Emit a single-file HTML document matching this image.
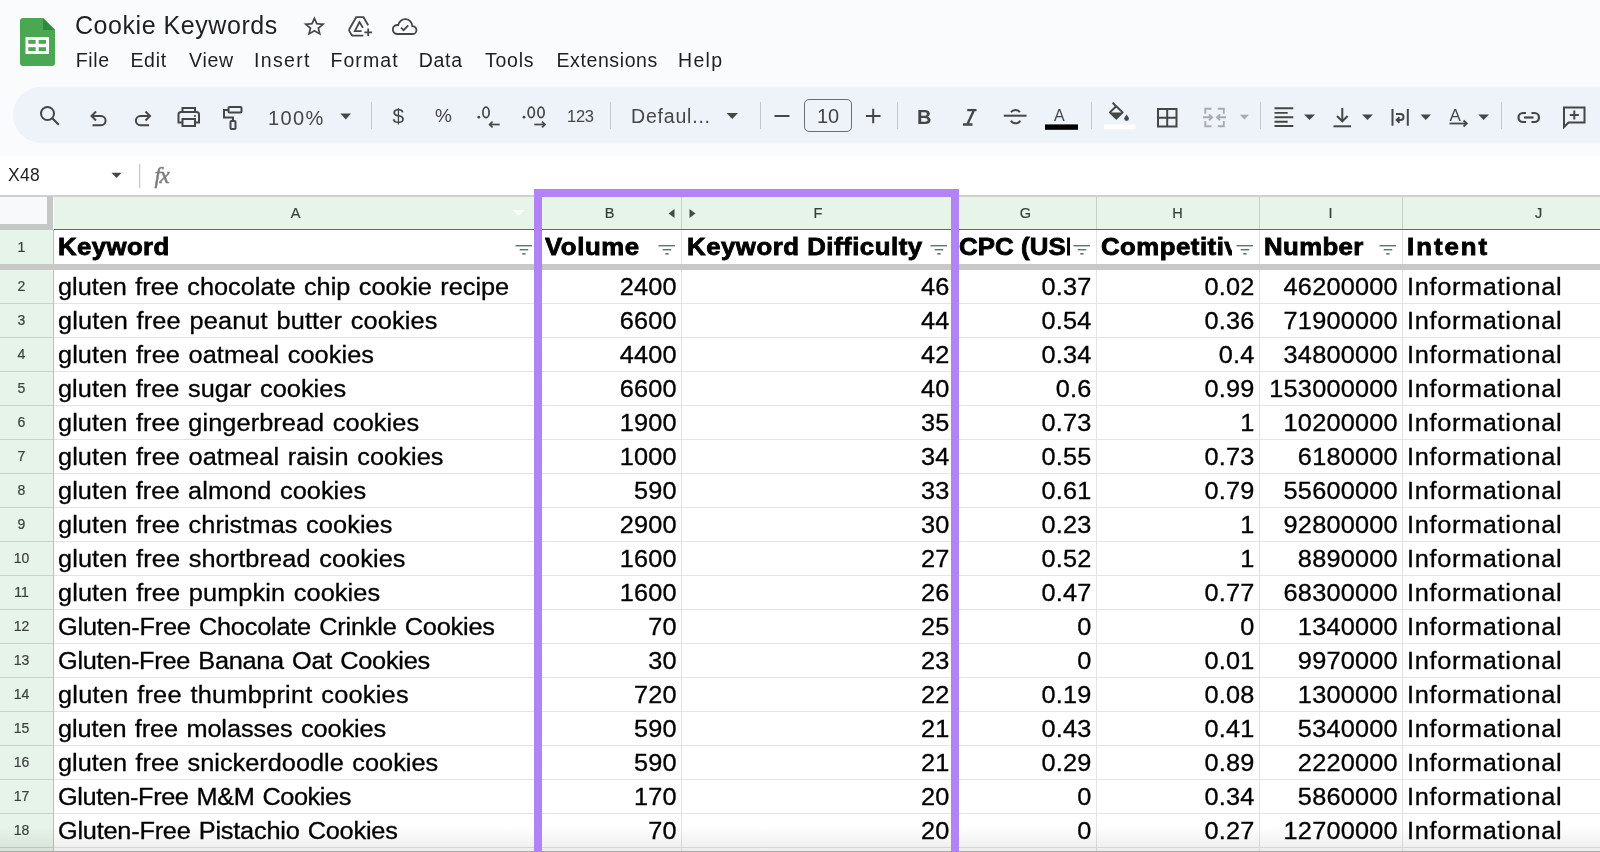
<!DOCTYPE html><html><head><meta charset="utf-8"><style>
*{margin:0;padding:0;box-sizing:border-box}
html,body{width:1600px;height:852px;overflow:hidden;background:#f9fbfd;font-family:"Liberation Sans",sans-serif;color:#1f1f1f}
.a{position:absolute;white-space:nowrap}
.menu{font-size:19.5px;letter-spacing:0.7px;color:#1f1f1f;top:48px;line-height:24px}
.tb{position:absolute;left:13px;top:87px;width:1640px;height:56px;border-radius:28px;background:#eef2f9}
.sep{position:absolute;top:102px;width:1px;height:27px;background:#c7c7c7}
.tbt{font-size:19.5px;color:#444746;line-height:24px}
.fbar{position:absolute;left:0;top:156px;width:1600px;height:39px;background:#fff}
.grid{position:absolute;left:0;top:195px;width:1600px;height:657px;background:#fff;overflow:hidden;will-change:transform}
.cell{position:absolute;font-size:23px;line-height:34px;color:#000;letter-spacing:1.3px;white-space:nowrap;overflow:hidden;-webkit-text-stroke:0.3px #000}
.num{letter-spacing:0.2px;text-align:right}
.sx{transform:scaleX(1.1);transform-origin:0 0}
.sxr{transform:scaleX(1.1);transform-origin:100% 0}
.hdr{font-weight:bold;letter-spacing:2.5px;-webkit-text-stroke:0.8px #000}
.rn{position:absolute;left:0;width:43px;text-align:center;font-size:14px;line-height:34px;color:#37423a;-webkit-text-stroke:0.2px #37423a}
.cl{position:absolute;top:1px;height:33px;text-align:center;font-size:14.5px;line-height:33px;color:#36433a;-webkit-text-stroke:0.2px #36433a}
</style></head><body><div style="position:absolute;left:0;top:0;width:1600px;height:852px;overflow:hidden;will-change:transform;background:#f9fbfd">
<svg class="a" style="left:0;top:0" width="80" height="80" viewBox="0 0 80 80">
<path d="M23 18 H43 L55 30 V63 a3 3 0 0 1 -3 3 H23 a3 3 0 0 1 -3 -3 V21 a3 3 0 0 1 3 -3z" fill="#4aa853"/>
<path d="M43 18 L55 30 H43z" fill="#2b8a3b"/>
<rect x="25.5" y="37" width="23.5" height="17" fill="#fff"/>
<rect x="28.3" y="40" width="7.4" height="3.8" fill="#4aa853"/>
<rect x="38.6" y="40" width="7.4" height="3.8" fill="#4aa853"/>
<rect x="28.3" y="47.2" width="7.4" height="3.8" fill="#4aa853"/>
<rect x="38.6" y="47.2" width="7.4" height="3.8" fill="#4aa853"/>
</svg>
<div class="a" style="left:75px;top:10px;font-size:25px;line-height:30px;letter-spacing:0.55px;color:#1f1f1f">Cookie Keywords</div>
<div class="a menu" style="left:75.7px;letter-spacing:0.7px">File</div>
<div class="a menu" style="left:130.4px;letter-spacing:0.7px">Edit</div>
<div class="a menu" style="left:189.1px;letter-spacing:0.7px">View</div>
<div class="a menu" style="left:254.1px;letter-spacing:1.3px">Insert</div>
<div class="a menu" style="left:330.4px;letter-spacing:1.1px">Format</div>
<div class="a menu" style="left:418.8px;letter-spacing:0.7px">Data</div>
<div class="a menu" style="left:485.1px;letter-spacing:0.7px">Tools</div>
<div class="a menu" style="left:556.5px;letter-spacing:0.6px">Extensions</div>
<div class="a menu" style="left:678.1px;letter-spacing:1.3px">Help</div>
<div class="tb"></div>
<div class="sep" style="left:370.5px"></div>
<div class="sep" style="left:609.5px"></div>
<div class="sep" style="left:759.5px"></div>
<div class="sep" style="left:896.5px"></div>
<div class="sep" style="left:1090.5px"></div>
<div class="sep" style="left:1259.5px"></div>
<div class="sep" style="left:1501.0px"></div>
<div class="a tbt" style="left:268px;top:106px;letter-spacing:1.4px;font-size:20px">100%</div>
<div class="a tbt" style="left:631px;top:104px;font-size:19.5px;letter-spacing:0.8px">Defaul...</div>
<div class="a" style="left:804px;top:99px;width:48px;height:33px;border:1.3px solid #6b6e70;border-radius:5px;background:transparent"></div>
<div class="a tbt" style="left:817px;top:104px;font-size:20px">10</div>
<div class="a tbt" style="left:567px;top:104px;font-size:16.5px;letter-spacing:-0.3px">123</div>
<div class="a tbt" style="left:392.5px;top:104px;font-size:21px">$</div>
<div class="a tbt" style="left:435px;top:104px;font-size:19px">%</div>
<svg class="a" style="left:0;top:0" width="1600" height="156" viewBox="0 0 1600 156"><g fill="none" stroke="#444746" stroke-width="2" stroke-linecap="butt"><circle cx="47.5" cy="113.5" r="6.5"/><path d="M52.3 118.3 L58.8 124.8" stroke-width="2.2"/><path d="M93 116 H101 a4.6 4.6 0 0 1 0 9.2 H92.5"/><path d="M96 111.5 L91.5 116 L96 120.5"/><path d="M148.5 116 H140.5 a4.6 4.6 0 0 0 0 9.2 H149"/><path d="M145.5 111.5 L150 116 L145.5 120.5"/><path d="M182.5 112 V108 H195 V112"/><path d="M182.5 122.5 H178.5 V114.5 a2.5 2.5 0 0 1 2.5 -2.5 H196.5 a2.5 2.5 0 0 1 2.5 2.5 V122.5 H195"/><rect x="182.5" y="119" width="12.5" height="7"/></g><circle cx="195" cy="116" r="1.1" fill="#444746"/><g fill="none" stroke="#444746" stroke-width="2"><rect x="228.5" y="107" width="13" height="5.5" rx="1"/><path d="M228.5 110 H224 V117.5 H233 V121"/><rect x="230.5" y="121" width="5" height="8" rx="1"/></g><path d="M340.5 113.5 H351 L345.75 119.5z" fill="#444746"/><g fill="#444746"><circle cx="478.8" cy="117.2" r="1.4"/><circle cx="524" cy="117.2" r="1.4"/></g><g fill="none" stroke="#444746" stroke-width="1.75"><ellipse cx="486" cy="112.4" rx="3.1" ry="5.2"/><ellipse cx="531.25" cy="112.4" rx="3.1" ry="5.2"/><ellipse cx="541" cy="112.4" rx="3.1" ry="5.2"/></g><g fill="none" stroke="#444746" stroke-width="1.7"><path d="M499.7 124.5 H490"/><path d="M492.6 121.6 L489.6 124.5 L492.6 127.4"/><path d="M534.3 124.5 H544.6"/><path d="M542 121.6 L545 124.5 L542 127.4"/></g><path d="M726.5 113 H738 L732.25 119z" fill="#444746"/><g stroke="#444746" stroke-width="2"><path d="M774.5 116 H789.5"/><path d="M866 116 H880.5 M873.2 108.8 V123.2"/></g><text x="917" y="124.3" font-size="20" font-weight="bold" fill="#444746" font-family="Liberation Sans">B</text><g stroke="#444746" fill="none"><path d="M967.3 110.1 H976.5" stroke-width="2.3"/><path d="M963 124.5 H972.5" stroke-width="2.5"/><path d="M973.6 111 L967.6 123.8" stroke-width="2.4"/></g><g fill="none" stroke="#444746" stroke-width="2"><path d="M1003.8 115.7 H1026.5"/><path d="M1011 112.3 a5 4.2 0 0 1 8.8 0"/><path d="M1011 120.6 a5 4.5 0 0 0 9.2 0"/></g><text x="1054" y="120.5" font-size="16" fill="#444746" font-family="Liberation Sans">A</text><rect x="1045" y="124.4" width="33" height="5.4" fill="#000"/><g fill="none" stroke="#444746" stroke-width="2" stroke-linejoin="round"><path d="M1112.6 102.6 L1116 106.2"/><path d="M1116.2 106.2 L1122.7 112.4 L1116.3 118.6 L1109.9 112.4z"/></g><path d="M1109.9 112.6 H1122.7 L1116.3 118.8z" fill="#444746"/><path d="M1126.6 114.4 q-2.4 3 -2.4 4.2 a2.4 2.4 0 0 0 4.8 0 q0 -1.2 -2.4 -4.2z" fill="#444746"/><rect x="1104" y="124.4" width="31.5" height="5" fill="#fff"/><g fill="none" stroke="#444746" stroke-width="2"><rect x="1158" y="109" width="18.5" height="17.5"/><path d="M1167.2 109 V126.5 M1158 117.7 H1176.5"/></g><g fill="none" stroke="#a8abae" stroke-width="1.9"><path d="M1211.5 108.7 H1205.3 V113.8 M1205.3 121 V126.3 H1211.5"/><path d="M1217.8 108.7 H1223.8 V113.8 M1223.8 121 V126.3 H1217.8"/><path d="M1203 117.3 H1212 M1209 114.3 L1212 117.3 L1209 120.3"/><path d="M1226 117.3 H1217 M1220 114.3 L1217 117.3 L1220 120.3"/></g><path d="M1239.8 114.8 H1249 L1244.4 119.6z" fill="#a8abae"/><g stroke="#444746" stroke-width="1.9"><path d="M1274.5 108.3 H1293.3 M1274.5 112.9 H1287.7 M1274.5 117.3 H1293.3 M1274.5 121.7 H1287.7 M1274.5 126 H1293.3"/></g><path d="M1304 114.5 H1315 L1309.5 120z" fill="#444746"/><g fill="none" stroke="#444746" stroke-width="2"><path d="M1342.3 108 V121"/><path d="M1337 116 L1342.3 121.3 L1347.6 116"/><path d="M1333.5 126.3 H1351"/></g><path d="M1362 114.5 H1373 L1367.5 120z" fill="#444746"/><g fill="none" stroke="#444746" stroke-width="2"><path d="M1392.5 109 V125.8 M1407.8 109 V125.8"/><path d="M1397 120 H1400.5 a3 3 0 0 0 0 -6 H1396"/><path d="M1399.5 117.3 L1396.7 120 L1399.5 122.7"/></g><path d="M1420.5 114.5 H1431 L1425.75 120z" fill="#444746"/><text x="1449.5" y="120.5" font-size="17" fill="#444746" font-family="Liberation Sans">A</text><g fill="none" stroke="#444746" stroke-width="1.8"><path d="M1449.5 123.5 H1466.5"/><path d="M1463.5 120.5 L1466.8 123.5 L1463.5 126.5"/></g><path d="M1478.3 114.5 H1489 L1483.65 120z" fill="#444746"/><g fill="none" stroke="#444746" stroke-width="2.2"><path d="M1526 113 H1523 a4.5 4.5 0 0 0 0 9 H1526"/><path d="M1531.5 113 H1534.5 a4.5 4.5 0 0 1 0 9 H1531.5"/><path d="M1524 117.5 H1533.5"/></g><g fill="none" stroke="#444746" stroke-width="2"><path d="M1564 127 V107.5 H1584.5 V122.5 H1568.5z"/><path d="M1574.3 110.5 V119.5 M1569.8 115 H1578.8"/></g><path fill-rule="evenodd" fill="#444746" d="M314.40 16.30 L317.43 22.99 L325.20 23.62 L319.31 28.40 L321.07 35.50 L314.40 31.73 L307.73 35.50 L309.50 28.40 L303.60 23.62 L311.37 23.00z M314.40 29.84 L310.34 32.13 L311.42 27.81 L307.83 24.90 L312.56 24.52 L314.40 20.44 L316.25 24.53 L320.98 24.91 L317.39 27.82 L318.47 32.14z"/><g fill="none" stroke="#444746" stroke-width="1.8"><path d="M368.2 25.2 L363.5 17.2 H356.2 L349.4 29 Q348.8 30.2 349.5 31.4 L351.6 35 Q352.2 35.6 353 35.6 H363.3"/><path d="M362.9 27.7 L359.5 22 L354.8 31.2 H361.6"/><path d="M368.2 28.4 V36 M364.4 32.3 H372"/></g><g fill="none" stroke="#444746" stroke-width="1.8"><path d="M397 34 H412.8 A3.9 3.9 0 1 0 412.3 26.2 A7.1 7.1 0 0 0 398.2 25.1 A4.5 4.5 0 1 0 397 34z"/><path d="M401.1 27.7 L403.6 30.2 L408.3 25.4"/></g></svg>
<div class="fbar"></div>
<div class="a" style="left:8px;top:163px;font-size:17.5px;line-height:24px;color:#1f1f1f;letter-spacing:0.3px">X48</div>
<svg class="a" style="left:0;top:150px" width="200" height="50" viewBox="0 150 200 50"><path d="M111.5 172.8 H121.5 L116.5 178z" fill="#444746"/><rect x="139" y="164" width="1.2" height="24" fill="#c7c7c7"/><text x="154.5" y="183" font-size="23" font-style="italic" fill="#7a7d80" stroke="#7a7d80" stroke-width="0.5" letter-spacing="-1.5" font-family="Liberation Serif">fx</text></svg>
<div class="grid"><div class="a" style="left:0px;top:0px;width:1600px;height:2px;background:#cfd1d0"></div><div class="a" style="left:0px;top:2px;width:47px;height:27px;background:#f8f9fb"></div><div class="a" style="left:47px;top:1px;width:6px;height:34px;background:#c6c8c7"></div><div class="a" style="left:0px;top:29px;width:53px;height:6px;background:#c6c8c7"></div><div class="a" style="left:54px;top:2px;width:1546px;height:32px;background:#e7f4e9"></div><div class="a" style="left:54px;top:34px;width:1546px;height:1.2px;background:#4c7a55"></div><div class="a" style="left:0px;top:35px;width:53px;height:622px;background:#e7f4e9"></div><div class="a" style="left:53px;top:35px;width:1px;height:622px;background:#b9c3bb"></div><div class="a" style="left:538px;top:2px;width:1px;height:32px;background:#c5d2c7"></div><div class="a" style="left:681px;top:2px;width:1px;height:32px;background:#c5d2c7"></div><div class="a" style="left:955px;top:2px;width:1px;height:32px;background:#c5d2c7"></div><div class="a" style="left:1096px;top:2px;width:1px;height:32px;background:#c5d2c7"></div><div class="a" style="left:1259px;top:2px;width:1px;height:32px;background:#c5d2c7"></div><div class="a" style="left:1402px;top:2px;width:1px;height:32px;background:#c5d2c7"></div><div class="cl" style="left:53px;top:2px;width:485px">A</div><div class="cl" style="left:538px;top:2px;width:143px">B</div><div class="cl" style="left:681px;top:2px;width:274px">F</div><div class="cl" style="left:955px;top:2px;width:141px">G</div><div class="cl" style="left:1096px;top:2px;width:163px">H</div><div class="cl" style="left:1259px;top:2px;width:143px">I</div><div class="cl" style="left:1402px;top:2px;width:273px">J</div><svg class="a" style="left:510px;top:11px" width="20" height="14" viewBox="510 206 20 14"><path d="M513 210 H524.5 L518.75 215.8z" fill="#ffffff" opacity="0.85"/></svg><svg class="a" style="left:660px;top:5px" width="40" height="25" viewBox="660 200 40 25"><path d="M674.5 209 V218 L668.5 213.5z" fill="#3f4f43"/><path d="M689.5 209 V218 L695.5 213.5z" fill="#3f4f43"/></svg><div class="a" style="left:538px;top:35px;width:1px;height:622px;background:#e2e3e3"></div><div class="a" style="left:681px;top:35px;width:1px;height:622px;background:#e2e3e3"></div><div class="a" style="left:955px;top:35px;width:1px;height:622px;background:#e2e3e3"></div><div class="a" style="left:1096px;top:35px;width:1px;height:622px;background:#e2e3e3"></div><div class="a" style="left:1259px;top:35px;width:1px;height:622px;background:#e2e3e3"></div><div class="a" style="left:1402px;top:35px;width:1px;height:622px;background:#e2e3e3"></div><div class="a" style="left:54px;top:108px;width:1546px;height:1px;background:#e2e3e3"></div><div class="a" style="left:0px;top:108px;width:53px;height:1px;background:#c9d3cb"></div><div class="a" style="left:54px;top:142px;width:1546px;height:1px;background:#e2e3e3"></div><div class="a" style="left:0px;top:142px;width:53px;height:1px;background:#c9d3cb"></div><div class="a" style="left:54px;top:176px;width:1546px;height:1px;background:#e2e3e3"></div><div class="a" style="left:0px;top:176px;width:53px;height:1px;background:#c9d3cb"></div><div class="a" style="left:54px;top:210px;width:1546px;height:1px;background:#e2e3e3"></div><div class="a" style="left:0px;top:210px;width:53px;height:1px;background:#c9d3cb"></div><div class="a" style="left:54px;top:244px;width:1546px;height:1px;background:#e2e3e3"></div><div class="a" style="left:0px;top:244px;width:53px;height:1px;background:#c9d3cb"></div><div class="a" style="left:54px;top:278px;width:1546px;height:1px;background:#e2e3e3"></div><div class="a" style="left:0px;top:278px;width:53px;height:1px;background:#c9d3cb"></div><div class="a" style="left:54px;top:312px;width:1546px;height:1px;background:#e2e3e3"></div><div class="a" style="left:0px;top:312px;width:53px;height:1px;background:#c9d3cb"></div><div class="a" style="left:54px;top:346px;width:1546px;height:1px;background:#e2e3e3"></div><div class="a" style="left:0px;top:346px;width:53px;height:1px;background:#c9d3cb"></div><div class="a" style="left:54px;top:380px;width:1546px;height:1px;background:#e2e3e3"></div><div class="a" style="left:0px;top:380px;width:53px;height:1px;background:#c9d3cb"></div><div class="a" style="left:54px;top:414px;width:1546px;height:1px;background:#e2e3e3"></div><div class="a" style="left:0px;top:414px;width:53px;height:1px;background:#c9d3cb"></div><div class="a" style="left:54px;top:448px;width:1546px;height:1px;background:#e2e3e3"></div><div class="a" style="left:0px;top:448px;width:53px;height:1px;background:#c9d3cb"></div><div class="a" style="left:54px;top:482px;width:1546px;height:1px;background:#e2e3e3"></div><div class="a" style="left:0px;top:482px;width:53px;height:1px;background:#c9d3cb"></div><div class="a" style="left:54px;top:516px;width:1546px;height:1px;background:#e2e3e3"></div><div class="a" style="left:0px;top:516px;width:53px;height:1px;background:#c9d3cb"></div><div class="a" style="left:54px;top:550px;width:1546px;height:1px;background:#e2e3e3"></div><div class="a" style="left:0px;top:550px;width:53px;height:1px;background:#c9d3cb"></div><div class="a" style="left:54px;top:584px;width:1546px;height:1px;background:#e2e3e3"></div><div class="a" style="left:0px;top:584px;width:53px;height:1px;background:#c9d3cb"></div><div class="a" style="left:54px;top:618px;width:1546px;height:1px;background:#e2e3e3"></div><div class="a" style="left:0px;top:618px;width:53px;height:1px;background:#c9d3cb"></div><div class="a" style="left:54px;top:652px;width:1546px;height:1px;background:#e2e3e3"></div><div class="a" style="left:0px;top:652px;width:53px;height:1px;background:#c9d3cb"></div><div class="a" style="left:0px;top:69px;width:1600px;height:6px;background:#c8c8c8"></div><div class="rn" style="top:35px;height:34px;line-height:34px">1</div><div class="rn" style="top:74px;height:34px;line-height:34px">2</div><div class="rn" style="top:108px;height:34px;line-height:34px">3</div><div class="rn" style="top:142px;height:34px;line-height:34px">4</div><div class="rn" style="top:176px;height:34px;line-height:34px">5</div><div class="rn" style="top:210px;height:34px;line-height:34px">6</div><div class="rn" style="top:244px;height:34px;line-height:34px">7</div><div class="rn" style="top:278px;height:34px;line-height:34px">8</div><div class="rn" style="top:312px;height:34px;line-height:34px">9</div><div class="rn" style="top:346px;height:34px;line-height:34px">10</div><div class="rn" style="top:380px;height:34px;line-height:34px">11</div><div class="rn" style="top:414px;height:34px;line-height:34px">12</div><div class="rn" style="top:448px;height:34px;line-height:34px">13</div><div class="rn" style="top:482px;height:34px;line-height:34px">14</div><div class="rn" style="top:516px;height:34px;line-height:34px">15</div><div class="rn" style="top:550px;height:34px;line-height:34px">16</div><div class="rn" style="top:584px;height:34px;line-height:34px">17</div><div class="rn" style="top:618px;height:34px;line-height:34px">18</div><div class="cell hdr" style="left:58px;top:34.5px;width:404.46px;letter-spacing:0.37px;transform:scaleX(1.12);transform-origin:0 0">Keyword</div><svg class="a" style="left:515px;top:49px" width="18" height="12" viewBox="0 0 18 12"><rect x="0.5" y="1" width="16.5" height="1.4" fill="#5f7466"/><rect x="4.7" y="5" width="8.5" height="1.4" fill="#5f7466"/><rect x="7.3" y="9" width="3.2" height="1.6" fill="#5f7466"/></svg><div class="cell hdr" style="left:544.5px;top:34.5px;width:97.77px;letter-spacing:0.54px;transform:scaleX(1.12);transform-origin:0 0">Volume</div><svg class="a" style="left:658px;top:49px" width="18" height="12" viewBox="0 0 18 12"><rect x="0.5" y="1" width="16.5" height="1.4" fill="#5f7466"/><rect x="4.7" y="5" width="8.5" height="1.4" fill="#5f7466"/><rect x="7.3" y="9" width="3.2" height="1.6" fill="#5f7466"/></svg><div class="cell hdr" style="left:686.5px;top:34.5px;width:215.62px;letter-spacing:0.47px;transform:scaleX(1.12);transform-origin:0 0">Keyword Difficulty</div><svg class="a" style="left:930px;top:49px" width="18" height="12" viewBox="0 0 18 12"><rect x="0.5" y="1" width="16.5" height="1.4" fill="#5f7466"/><rect x="4.7" y="5" width="8.5" height="1.4" fill="#5f7466"/><rect x="7.3" y="9" width="3.2" height="1.6" fill="#5f7466"/></svg><div class="cell hdr" style="left:958.5px;top:34.5px;width:98.66px;letter-spacing:0.1px;transform:scaleX(1.12);transform-origin:0 0">CPC (USD)</div><svg class="a" style="left:1073px;top:49px" width="18" height="12" viewBox="0 0 18 12"><rect x="0.5" y="1" width="16.5" height="1.4" fill="#5f7466"/><rect x="4.7" y="5" width="8.5" height="1.4" fill="#5f7466"/><rect x="7.3" y="9" width="3.2" height="1.6" fill="#5f7466"/></svg><div class="cell hdr" style="left:1101px;top:34.5px;width:116.96px;letter-spacing:0.45px;transform:scaleX(1.12);transform-origin:0 0">Competitive Density</div><svg class="a" style="left:1236px;top:49px" width="18" height="12" viewBox="0 0 18 12"><rect x="0.5" y="1" width="16.5" height="1.4" fill="#5f7466"/><rect x="4.7" y="5" width="8.5" height="1.4" fill="#5f7466"/><rect x="7.3" y="9" width="3.2" height="1.6" fill="#5f7466"/></svg><div class="cell hdr" style="left:1264px;top:34.5px;width:99.11px;letter-spacing:0.36px;transform:scaleX(1.12);transform-origin:0 0">Number</div><svg class="a" style="left:1379px;top:49px" width="18" height="12" viewBox="0 0 18 12"><rect x="0.5" y="1" width="16.5" height="1.4" fill="#5f7466"/><rect x="4.7" y="5" width="8.5" height="1.4" fill="#5f7466"/><rect x="7.3" y="9" width="3.2" height="1.6" fill="#5f7466"/></svg><div class="cell hdr" style="left:1407px;top:34.5px;width:238.39px;letter-spacing:1.79px;transform:scaleX(1.12);transform-origin:0 0">Intent</div><div class="cell sx" style="left:58px;top:74.5px;width:427.27px;word-spacing:1.3px;letter-spacing:-0.01px">gluten free chocolate chip cookie recipe</div><div class="cell num sxr" style="left:550.59px;top:74.5px;width:125.91px">2400</div><div class="cell num sxr" style="left:705.45px;top:74.5px;width:244.55px">46</div><div class="cell num sxr" style="left:967.45px;top:74.5px;width:124.55px">0.37</div><div class="cell num sxr" style="left:1110.45px;top:74.5px;width:144.55px">0.02</div><div class="cell num sxr" style="left:1271.59px;top:74.5px;width:125.91px">46200000</div><div class="cell sx" style="left:1407px;top:74.5px;width:236px;letter-spacing:0.63px">Informational</div><div class="cell sx" style="left:58px;top:108.5px;width:427.27px;word-spacing:1.3px;letter-spacing:0.15px">gluten free peanut butter cookies</div><div class="cell num sxr" style="left:550.59px;top:108.5px;width:125.91px">6600</div><div class="cell num sxr" style="left:705.45px;top:108.5px;width:244.55px">44</div><div class="cell num sxr" style="left:967.45px;top:108.5px;width:124.55px">0.54</div><div class="cell num sxr" style="left:1110.45px;top:108.5px;width:144.55px">0.36</div><div class="cell num sxr" style="left:1271.59px;top:108.5px;width:125.91px">71900000</div><div class="cell sx" style="left:1407px;top:108.5px;width:236px;letter-spacing:0.63px">Informational</div><div class="cell sx" style="left:58px;top:142.5px;width:427.27px;word-spacing:1.3px;letter-spacing:0.08px">gluten free oatmeal cookies</div><div class="cell num sxr" style="left:550.59px;top:142.5px;width:125.91px">4400</div><div class="cell num sxr" style="left:705.45px;top:142.5px;width:244.55px">42</div><div class="cell num sxr" style="left:967.45px;top:142.5px;width:124.55px">0.34</div><div class="cell num sxr" style="left:1110.45px;top:142.5px;width:144.55px">0.4</div><div class="cell num sxr" style="left:1271.59px;top:142.5px;width:125.91px">34800000</div><div class="cell sx" style="left:1407px;top:142.5px;width:236px;letter-spacing:0.63px">Informational</div><div class="cell sx" style="left:58px;top:176.5px;width:427.27px;word-spacing:1.3px;letter-spacing:0.04px">gluten free sugar cookies</div><div class="cell num sxr" style="left:550.59px;top:176.5px;width:125.91px">6600</div><div class="cell num sxr" style="left:705.45px;top:176.5px;width:244.55px">40</div><div class="cell num sxr" style="left:967.45px;top:176.5px;width:124.55px">0.6</div><div class="cell num sxr" style="left:1110.45px;top:176.5px;width:144.55px">0.99</div><div class="cell num sxr" style="left:1271.59px;top:176.5px;width:125.91px">153000000</div><div class="cell sx" style="left:1407px;top:176.5px;width:236px;letter-spacing:0.63px">Informational</div><div class="cell sx" style="left:58px;top:210.5px;width:427.27px;word-spacing:1.3px;letter-spacing:0.07px">gluten free gingerbread cookies</div><div class="cell num sxr" style="left:550.59px;top:210.5px;width:125.91px">1900</div><div class="cell num sxr" style="left:705.45px;top:210.5px;width:244.55px">35</div><div class="cell num sxr" style="left:967.45px;top:210.5px;width:124.55px">0.73</div><div class="cell num sxr" style="left:1110.45px;top:210.5px;width:144.55px">1</div><div class="cell num sxr" style="left:1271.59px;top:210.5px;width:125.91px">10200000</div><div class="cell sx" style="left:1407px;top:210.5px;width:236px;letter-spacing:0.63px">Informational</div><div class="cell sx" style="left:58px;top:244.5px;width:427.27px;word-spacing:1.3px;letter-spacing:0.08px">gluten free oatmeal raisin cookies</div><div class="cell num sxr" style="left:550.59px;top:244.5px;width:125.91px">1000</div><div class="cell num sxr" style="left:705.45px;top:244.5px;width:244.55px">34</div><div class="cell num sxr" style="left:967.45px;top:244.5px;width:124.55px">0.55</div><div class="cell num sxr" style="left:1110.45px;top:244.5px;width:144.55px">0.73</div><div class="cell num sxr" style="left:1271.59px;top:244.5px;width:125.91px">6180000</div><div class="cell sx" style="left:1407px;top:244.5px;width:236px;letter-spacing:0.63px">Informational</div><div class="cell sx" style="left:58px;top:278.5px;width:427.27px;word-spacing:1.3px;letter-spacing:0.05px">gluten free almond cookies</div><div class="cell num sxr" style="left:550.59px;top:278.5px;width:125.91px">590</div><div class="cell num sxr" style="left:705.45px;top:278.5px;width:244.55px">33</div><div class="cell num sxr" style="left:967.45px;top:278.5px;width:124.55px">0.61</div><div class="cell num sxr" style="left:1110.45px;top:278.5px;width:144.55px">0.79</div><div class="cell num sxr" style="left:1271.59px;top:278.5px;width:125.91px">55600000</div><div class="cell sx" style="left:1407px;top:278.5px;width:236px;letter-spacing:0.63px">Informational</div><div class="cell sx" style="left:58px;top:312.5px;width:427.27px;word-spacing:1.3px;letter-spacing:0.08px">gluten free christmas cookies</div><div class="cell num sxr" style="left:550.59px;top:312.5px;width:125.91px">2900</div><div class="cell num sxr" style="left:705.45px;top:312.5px;width:244.55px">30</div><div class="cell num sxr" style="left:967.45px;top:312.5px;width:124.55px">0.23</div><div class="cell num sxr" style="left:1110.45px;top:312.5px;width:144.55px">1</div><div class="cell num sxr" style="left:1271.59px;top:312.5px;width:125.91px">92800000</div><div class="cell sx" style="left:1407px;top:312.5px;width:236px;letter-spacing:0.63px">Informational</div><div class="cell sx" style="left:58px;top:346.5px;width:427.27px;word-spacing:1.3px;letter-spacing:0.09px">gluten free shortbread cookies</div><div class="cell num sxr" style="left:550.59px;top:346.5px;width:125.91px">1600</div><div class="cell num sxr" style="left:705.45px;top:346.5px;width:244.55px">27</div><div class="cell num sxr" style="left:967.45px;top:346.5px;width:124.55px">0.52</div><div class="cell num sxr" style="left:1110.45px;top:346.5px;width:144.55px">1</div><div class="cell num sxr" style="left:1271.59px;top:346.5px;width:125.91px">8890000</div><div class="cell sx" style="left:1407px;top:346.5px;width:236px;letter-spacing:0.63px">Informational</div><div class="cell sx" style="left:58px;top:380.5px;width:427.27px;word-spacing:1.3px;letter-spacing:0.1px">gluten free pumpkin cookies</div><div class="cell num sxr" style="left:550.59px;top:380.5px;width:125.91px">1600</div><div class="cell num sxr" style="left:705.45px;top:380.5px;width:244.55px">26</div><div class="cell num sxr" style="left:967.45px;top:380.5px;width:124.55px">0.47</div><div class="cell num sxr" style="left:1110.45px;top:380.5px;width:144.55px">0.77</div><div class="cell num sxr" style="left:1271.59px;top:380.5px;width:125.91px">68300000</div><div class="cell sx" style="left:1407px;top:380.5px;width:236px;letter-spacing:0.63px">Informational</div><div class="cell sx" style="left:58px;top:414.5px;width:427.27px;word-spacing:1.3px;letter-spacing:-0.19px">Gluten-Free Chocolate Crinkle Cookies</div><div class="cell num sxr" style="left:550.59px;top:414.5px;width:125.91px">70</div><div class="cell num sxr" style="left:705.45px;top:414.5px;width:244.55px">25</div><div class="cell num sxr" style="left:967.45px;top:414.5px;width:124.55px">0</div><div class="cell num sxr" style="left:1110.45px;top:414.5px;width:144.55px">0</div><div class="cell num sxr" style="left:1271.59px;top:414.5px;width:125.91px">1340000</div><div class="cell sx" style="left:1407px;top:414.5px;width:236px;letter-spacing:0.63px">Informational</div><div class="cell sx" style="left:58px;top:448.5px;width:427.27px;word-spacing:1.3px;letter-spacing:-0.24px">Gluten-Free Banana Oat Cookies</div><div class="cell num sxr" style="left:550.59px;top:448.5px;width:125.91px">30</div><div class="cell num sxr" style="left:705.45px;top:448.5px;width:244.55px">23</div><div class="cell num sxr" style="left:967.45px;top:448.5px;width:124.55px">0</div><div class="cell num sxr" style="left:1110.45px;top:448.5px;width:144.55px">0.01</div><div class="cell num sxr" style="left:1271.59px;top:448.5px;width:125.91px">9970000</div><div class="cell sx" style="left:1407px;top:448.5px;width:236px;letter-spacing:0.63px">Informational</div><div class="cell sx" style="left:58px;top:482.5px;width:427.27px;word-spacing:1.3px;letter-spacing:0.23px">gluten free thumbprint cookies</div><div class="cell num sxr" style="left:550.59px;top:482.5px;width:125.91px">720</div><div class="cell num sxr" style="left:705.45px;top:482.5px;width:244.55px">22</div><div class="cell num sxr" style="left:967.45px;top:482.5px;width:124.55px">0.19</div><div class="cell num sxr" style="left:1110.45px;top:482.5px;width:144.55px">0.08</div><div class="cell num sxr" style="left:1271.59px;top:482.5px;width:125.91px">1300000</div><div class="cell sx" style="left:1407px;top:482.5px;width:236px;letter-spacing:0.63px">Informational</div><div class="cell sx" style="left:58px;top:516.5px;width:427.27px;word-spacing:1.3px;letter-spacing:-0.08px">gluten free molasses cookies</div><div class="cell num sxr" style="left:550.59px;top:516.5px;width:125.91px">590</div><div class="cell num sxr" style="left:705.45px;top:516.5px;width:244.55px">21</div><div class="cell num sxr" style="left:967.45px;top:516.5px;width:124.55px">0.43</div><div class="cell num sxr" style="left:1110.45px;top:516.5px;width:144.55px">0.41</div><div class="cell num sxr" style="left:1271.59px;top:516.5px;width:125.91px">5340000</div><div class="cell sx" style="left:1407px;top:516.5px;width:236px;letter-spacing:0.63px">Informational</div><div class="cell sx" style="left:58px;top:550.5px;width:427.27px;word-spacing:1.3px;letter-spacing:0.01px">gluten free snickerdoodle cookies</div><div class="cell num sxr" style="left:550.59px;top:550.5px;width:125.91px">590</div><div class="cell num sxr" style="left:705.45px;top:550.5px;width:244.55px">21</div><div class="cell num sxr" style="left:967.45px;top:550.5px;width:124.55px">0.29</div><div class="cell num sxr" style="left:1110.45px;top:550.5px;width:144.55px">0.89</div><div class="cell num sxr" style="left:1271.59px;top:550.5px;width:125.91px">2220000</div><div class="cell sx" style="left:1407px;top:550.5px;width:236px;letter-spacing:0.63px">Informational</div><div class="cell sx" style="left:58px;top:584.5px;width:427.27px;word-spacing:1.3px;letter-spacing:-0.37px">Gluten-Free M&amp;M Cookies</div><div class="cell num sxr" style="left:550.59px;top:584.5px;width:125.91px">170</div><div class="cell num sxr" style="left:705.45px;top:584.5px;width:244.55px">20</div><div class="cell num sxr" style="left:967.45px;top:584.5px;width:124.55px">0</div><div class="cell num sxr" style="left:1110.45px;top:584.5px;width:144.55px">0.34</div><div class="cell num sxr" style="left:1271.59px;top:584.5px;width:125.91px">5860000</div><div class="cell sx" style="left:1407px;top:584.5px;width:236px;letter-spacing:0.63px">Informational</div><div class="cell sx" style="left:58px;top:618.5px;width:427.27px;word-spacing:1.3px;letter-spacing:-0.2px">Gluten-Free Pistachio Cookies</div><div class="cell num sxr" style="left:550.59px;top:618.5px;width:125.91px">70</div><div class="cell num sxr" style="left:705.45px;top:618.5px;width:244.55px">20</div><div class="cell num sxr" style="left:967.45px;top:618.5px;width:124.55px">0</div><div class="cell num sxr" style="left:1110.45px;top:618.5px;width:144.55px">0.27</div><div class="cell num sxr" style="left:1271.59px;top:618.5px;width:125.91px">12700000</div><div class="cell sx" style="left:1407px;top:618.5px;width:236px;letter-spacing:0.63px">Informational</div><div class="a" style="left:0;top:631px;width:1600px;height:25px;background:linear-gradient(rgba(0,0,0,0),rgba(0,0,0,0.07))"></div><div class="a" style="left:0px;top:656px;width:1600px;height:1px;background:#a8a8a8"></div><div class="a" style="left:534px;top:-6px;width:425px;height:700px;border:8px solid #b084f2"></div></div>
<div class="a" style="left:534px;top:189px;width:425px;height:6px;background:#b084f2"></div>
</div></body></html>
